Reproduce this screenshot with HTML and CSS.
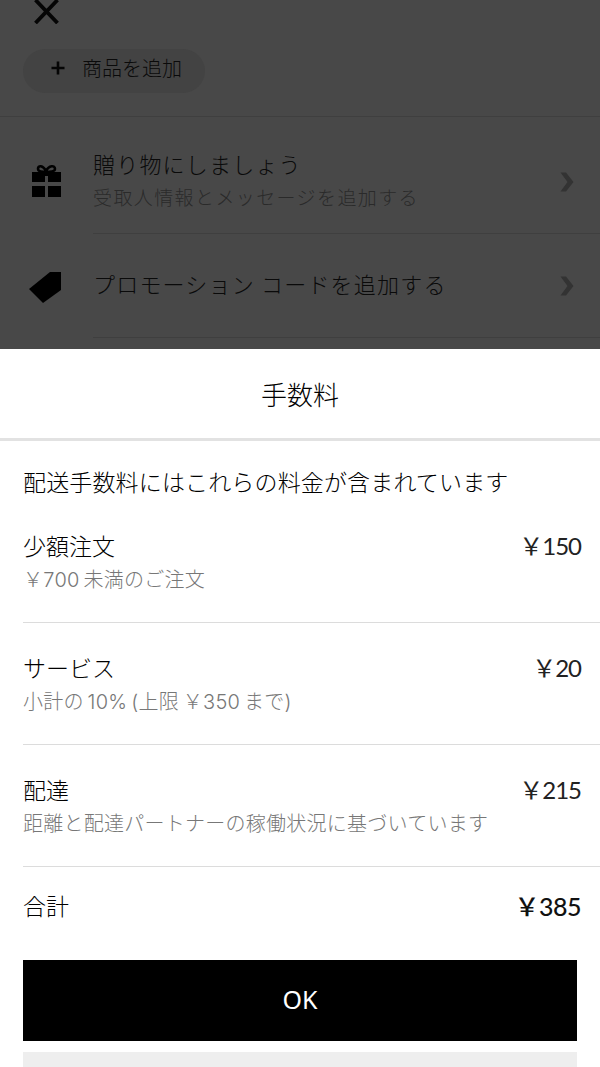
FILE: index.html
```html
<!doctype html>
<html lang="ja">
  <head>
    <meta charset="utf-8">
    <title>手数料</title>
    <link rel="stylesheet" href="styles.css">
  </head>

  <body>
    <div class="behind">
      <svg class="close-icon" width="30" height="24" viewBox="0 0 30 24">
        <path d="M4.5 0 L26.5 23 M26.5 0 L4.5 23" stroke="#050505" stroke-width="3.8" fill="none"/>
      </svg>
      <div class="add-chip">
        <svg width="14" height="14" viewBox="0 0 14 14">
          <path d="M7 0.5 V13.5 M0.5 7 H13.5" stroke="#050505" stroke-width="2.6" fill="none"/>
        </svg>
        <span class="add-label">商品を追加</span>
      </div>
      <div class="behind-line"></div>

      <div class="option option-gift">
        <svg class="option-icon" width="36" height="36" viewBox="0 0 36 36">
          <path d="M4 9 H33 V19 H20 V13 H17 V19 H4 Z M4 23 H17 V34 H4 Z M20 23 H33 V34 H20 Z" fill="#000"/>
          <path d="M18 8 C15 2 10 2 10 6 C10 8 12 9 18 9 C24 9 27 8 27 6 C27 2 21 2 18 8" stroke="#000" stroke-width="2.6" fill="none"/>
        </svg>
        <div class="option-body">
          <div class="option-title">贈り物にしましょう</div>
          <div class="option-sub">受取人情報とメッセージを追加する</div>
        </div>
        <svg class="chevron" width="14" height="20" viewBox="0 0 14 20">
          <path d="M0.5 0.5 H6 L13.5 10 L6 19.5 H0.5 L7.5 10 Z" fill="#333"/>
        </svg>
      </div>

      <div class="option option-promo">
        <svg class="option-icon" width="36" height="36" viewBox="0 0 36 36">
          <path d="M22 4 H33 V22 L15 35 L1 21 Z" fill="#000"/>
        </svg>
        <div class="option-body">
          <div class="option-title">プロモーション コードを追加する</div>
        </div>
        <svg class="chevron" width="14" height="20" viewBox="0 0 14 20">
          <path d="M0.5 0.5 H6 L13.5 10 L6 19.5 H0.5 L7.5 10 Z" fill="#333"/>
        </svg>
      </div>
    </div>

    <div class="sheet">
      <div class="sheet-title">手数料</div>
      <div class="sheet-body">
        <p class="intro">配送手数料にはこれらの料金が含まれています</p>

        <div class="fee">
          <div>
            <div class="fee-name">少額注文</div>
            <div class="fee-note">￥700 未満のご注文</div>
          </div>
          <div class="fee-price">￥150</div>
        </div>

        <div class="fee">
          <div>
            <div class="fee-name">サービス</div>
            <div class="fee-note">小計の 10% (上限 ￥350 まで)</div>
          </div>
          <div class="fee-price">￥20</div>
        </div>

        <div class="fee">
          <div>
            <div class="fee-name">配達</div>
            <div class="fee-note">距離と配達パートナーの稼働状況に基づいています</div>
          </div>
          <div class="fee-price">￥215</div>
        </div>

        <div class="total">
          <div class="fee-name">合計</div>
          <div class="fee-price total-price">￥385</div>
        </div>

        <button class="ok">OK</button>
        <div class="grey-bar"></div>
      </div>
    </div>
  </body>
</html>
```

FILE: styles.css
```css
html,
body {
  margin: 0;
  height: 1067px;
  overflow: hidden;
}

body {
  font-family: "Noto Sans CJK JP", "Noto Sans", sans-serif;
  font-weight: 300;
  color: #000;
  background: #fff;
}

.behind {
  height: 349px;
  box-sizing: border-box;
  background: #484848;
  overflow: hidden;
  color: #0a0a0a;
}

.close-icon {
  display: block;
  margin-left: 31px;
}

.add-chip {
  display: flex;
  align-items: center;
  gap: 17px;
  width: 182px;
  height: 44px;
  margin: 25px 0 0 23px;
  padding: 0 0 6px 28px;
  box-sizing: border-box;
  border-radius: 22px;
  background: #434343;
  font-size: 20px;
}

.add-label {
  padding-bottom: 2px;
}

.behind-line {
  height: 1px;
  margin-top: 23px;
  background: #3f3f3f;
}

.option {
  display: flex;
  align-items: center;
  padding-right: 26px;
}

.option-gift {
  height: 117px;
}

.option-promo {
  height: 104px;
}

.option-icon {
  flex: none;
  margin-left: 28px;
  margin-right: 29px;
}

.option-gift .option-icon {
  margin-top: 11px;
}

.option-body {
  flex: 1;
  align-self: stretch;
  display: flex;
  flex-direction: column;
  justify-content: center;
  border-bottom: 1px solid #3f3f3f;
}

.option-gift .option-body {
  padding-top: 10px;
}

.option-promo .option-body {
  padding-bottom: 6px;
}

.option-title {
  font-size: 22px;
  line-height: 32px;
  letter-spacing: 1.2px;
}

.option-sub {
  margin-top: 2px;
  font-size: 19px;
  line-height: 32px;
  letter-spacing: 1.4px;
  color: #2a2a2a;
}

.chevron {
  flex: none;
  margin-left: -40px;
}

.option-gift .chevron {
  margin-top: 12px;
}

.sheet-title {
  height: 89px;
  line-height: 89px;
  text-align: center;
  font-size: 26px;
  border-bottom: 3px solid #e2e2e2;
}

.sheet-body {
  padding: 0 23px;
}

.intro {
  margin: 0;
  padding-top: 23px;
  font-size: 23px;
  line-height: 34px;
  letter-spacing: 0.15px;
}

.fee {
  display: flex;
  justify-content: space-between;
  height: 122px;
  box-sizing: border-box;
  border-bottom: 1px solid #dcdcdc;
  margin-right: -23px;
  padding-right: 19px;
}

.intro + .fee {
  height: 125px;
  padding-top: 30px;
}

.fee + .fee {
  padding-top: 27px;
}

.fee-name {
  font-size: 23px;
  line-height: 34px;
}

.fee-note {
  margin-top: 2px;
  font-family: Inter, "Noto Sans CJK JP", sans-serif;
  font-size: 20px;
  line-height: 32px;
  letter-spacing: 0.25px;
  word-spacing: -2px;
  color: #777;
}

.fee-price {
  margin-top: 1px;
  font-family: Lato, "Noto Sans CJK JP", sans-serif;
  font-size: 24px;
  line-height: 34px;
  letter-spacing: -1px;
  font-weight: 400;
  color: #222;
}

.total {
  display: flex;
  justify-content: space-between;
  height: 93px;
  box-sizing: border-box;
  padding: 21px 19px 0 0;
  margin-right: -23px;
}

.total-price {
  margin-top: 1px;
  font-size: 25px;
  letter-spacing: -0.5px;
  font-weight: 500;
  color: #111;
}

.ok {
  display: block;
  width: 100%;
  height: 81px;
  border: 0;
  padding: 0 0 3px;
  background: #000;
  color: #fff;
  font-family: "Noto Sans", sans-serif;
  font-size: 25px;
}

.grey-bar {
  height: 15px;
  margin-top: 11px;
  background: #eee;
}
```
